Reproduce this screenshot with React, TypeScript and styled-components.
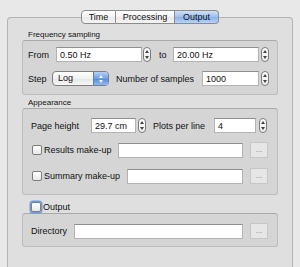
import React from "react";
import styled, { createGlobalStyle } from "styled-components";

const Global = createGlobalStyle`
  html, body {
    margin: 0;
    padding: 0;
    background: #e8e8e8;
    overflow: hidden;
  }
  body {
    font-family: "Liberation Sans", Arial, sans-serif;
    font-size: 9px;
    color: #111;
  }
`;

const Window = styled.div`
  width: 300px;
  height: 267px;
  padding-top: 17px;
  box-sizing: border-box;
  overflow: hidden;
`;

const Panel = styled.div`
  margin: 0 7px;
  height: 250px;
  box-sizing: border-box;
  border: 1px solid #b4b4b4;
  border-bottom: 0;
  border-radius: 4px 4px 0 0;
  background: #dfdfdf;
  padding: 0 14px;
`;

const TabBar = styled.div`
  display: flex;
  justify-content: center;
  margin-top: -8px;
`;

const Tab = styled.div<{ $active?: boolean; $w: number }>`
  width: ${(p) => p.$w}px;
  height: 14px;
  box-sizing: border-box;
  display: flex;
  align-items: center;
  justify-content: center;
  font-size: 9px;
  color: #111;
  border: 1px solid #8c8c8c;
  border-left-width: 0;
  background: ${(p) =>
    p.$active
      ? "linear-gradient(#cfe0f8, #9cc0f0 50%, #87b2ec 51%, #b9d3f6)"
      : "linear-gradient(#ffffff, #f3f3f3 50%, #e9e9e9 51%, #f4f4f4)"};
  &:first-child {
    border-left-width: 1px;
    border-radius: 4px 0 0 4px;
  }
  &:last-child {
    border-radius: 0 4px 4px 0;
  }
`;

const Title = styled.div<{ $top: number }>`
  font-size: 8px;
  line-height: 10px;
  margin-top: ${(p) => p.$top}px;
  padding-left: 6px;
`;

const Group = styled.div<{ $pt: number; $pb: number; $pl: number }>`
  background: #d5d5d5;
  border: 1px solid #bdbdbd;
  border-top-color: #a9a9a9;
  border-radius: 3px;
  padding: ${(p) => `${p.$pt}px 0 ${p.$pb}px ${p.$pl}px`};
  display: flex;
  flex-direction: column;
`;

const Row = styled.div<{ $h: number; $mt?: number }>`
  display: flex;
  align-items: center;
  height: ${(p) => p.$h}px;
  margin-top: ${(p) => p.$mt ?? 0}px;
`;

const Label = styled.span<{ $w: number; $ml?: number }>`
  width: ${(p) => p.$w}px;
  margin-left: ${(p) => p.$ml ?? 0}px;
  flex: none;
  white-space: nowrap;
`;

const Field = styled.div<{ $w: number }>`
  width: ${(p) => p.$w}px;
  height: 15px;
  box-sizing: border-box;
  flex: none;
  background: #fff;
  border: 1px solid #b3b3b3;
  border-top-color: #8f8f8f;
  padding-left: 3px;
  display: flex;
  align-items: center;
  font-size: 9px;
`;

const SpinBox = styled.div<{ $ml: number }>`
  margin-left: ${(p) => p.$ml}px;
  width: 8px;
  height: 15px;
  box-sizing: border-box;
  flex: none;
  border: 1px solid #7d7d7d;
  border-radius: 4px;
  background: linear-gradient(#ffffff, #ececec);
  display: flex;
  flex-direction: column;
  align-items: center;
  justify-content: center;
  gap: 3px;
`;

const Select = styled.div`
  width: 57px;
  height: 15px;
  box-sizing: border-box;
  flex: none;
  border: 1px solid #7f7f7f;
  border-radius: 4px;
  background: linear-gradient(#ffffff, #f1f1f1 50%, #e6e6e6 51%, #f7f7f7);
  display: flex;
  overflow: hidden;
`;

const SelectText = styled.span`
  flex: 1;
  padding-left: 5px;
  line-height: 13px;
`;

const SelectArrows = styled.div`
  width: 14px;
  background: linear-gradient(#b6d1f4, #6ea0e6 50%, #4f8bdf 51%, #8fbaf0);
  border-left: 1px solid #5a7fb5;
  display: flex;
  flex-direction: column;
  align-items: center;
  justify-content: center;
  gap: 2px;
`;

const Check = styled.div<{ $focus?: boolean; $ml?: number }>`
  width: 10px;
  height: 10px;
  box-sizing: border-box;
  flex: none;
  margin-left: ${(p) => p.$ml ?? 1}px;
  border: 1px solid #7e7e7e;
  border-radius: 2px;
  background: linear-gradient(#ffffff, #e8e8e8);
  box-shadow: ${(p) => (p.$focus ? "0 0 0 1.5px #6b9be0" : "none")};
`;

const Dots = styled.div`
  width: 18px;
  height: 16px;
  box-sizing: border-box;
  flex: none;
  margin-left: 7px;
  border: 1px solid #c6c6c6;
  background: #e6e6e6;
  color: #7a7a7a;
  font-size: 8px;
  display: flex;
  align-items: center;
  justify-content: center;
  padding-bottom: 2px;
`;

const Arrow = ({ up, color = "#444" }: { up?: boolean; color?: string }) => (
  <svg width="4" height="3" viewBox="0 0 4 3">
    <path d={up ? "M0 3 L2 0 L4 3 Z" : "M0 0 L4 0 L2 3 Z"} fill={color} />
  </svg>
);

const Spinner = ({ ml }: { ml: number }) => (
  <SpinBox $ml={ml}>
    <Arrow up />
    <Arrow />
  </SpinBox>
);

export default function App() {
  return (
    <Window>
      <Global />
      <Panel>
        <TabBar>
          <Tab $w={35}>Time</Tab>
          <Tab $w={59}>Processing</Tab>
          <Tab $w={44} $active>
            Output
          </Tab>
        </TabBar>

        <Title $top={6}>Frequency sampling</Title>
        <Group $pt={6} $pb={8} $pl={5}>
          <Row $h={15}>
            <Label $w={28}>From</Label>
            <Field $w={86}>0.50 Hz</Field>
            <Spinner ml={1} />
            <Label $w={14} $ml={8}>to</Label>
            <Field $w={86}>20.00 Hz</Field>
            <Spinner ml={2} />
          </Row>
          <Row $h={15} $mt={9}>
            <Label $w={24}>Step</Label>
            <Select>
              <SelectText>Log</SelectText>
              <SelectArrows>
                <Arrow up color="#fff" />
                <Arrow color="#fff" />
              </SelectArrows>
            </Select>
            <Label $w={86} $ml={7}>Number of samples</Label>
            <Field $w={57}>1000</Field>
            <Spinner ml={2} />
          </Row>
        </Group>

        <Title $top={3}>Appearance</Title>
        <Group $pt={9} $pb={10} $pl={8}>
          <Row $h={15}>
            <Label $w={60}>Page height</Label>
            <Field $w={45}>29.7 cm</Field>
            <Spinner ml={2} />
            <Label $w={61} $ml={7}>Plots per line</Label>
            <Field $w={42}>4</Field>
            <Spinner ml={3} />
          </Row>
          <Row $h={16} $mt={9}>
            <Check />
            <Label $w={74} $ml={2}>Results make-up</Label>
            <Field $w={125} />
            <Dots>...</Dots>
          </Row>
          <Row $h={16} $mt={10}>
            <Check />
            <Label $w={83} $ml={2}>Summary make-up</Label>
            <Field $w={116} />
            <Dots>...</Dots>
          </Row>
        </Group>

        <Row $h={12} $mt={6}>
          <Check $focus $ml={9} />
          <Label $w={40} $ml={2}>Output</Label>
        </Row>
        <Group $pt={9} $pb={7} $pl={8}>
          <Row $h={16}>
            <Label $w={43}>Directory</Label>
            <Field $w={169} />
            <Dots>...</Dots>
          </Row>
        </Group>
      </Panel>
    </Window>
  );
}
